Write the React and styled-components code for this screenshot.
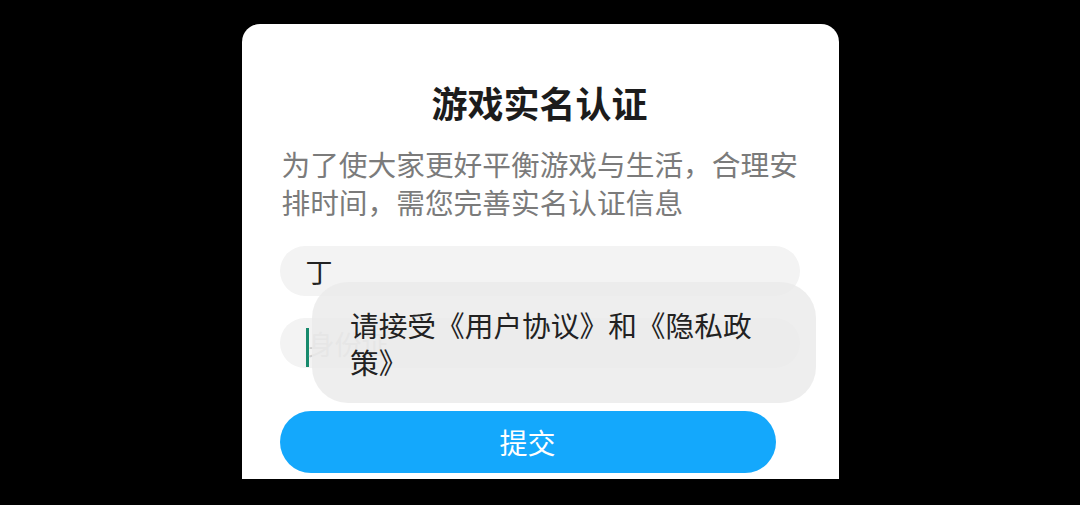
import React from "react";
import styled, { createGlobalStyle } from "styled-components";

const Global = createGlobalStyle`
  html, body { margin: 0; padding: 0; background: #000; }
  body { font-family: "Noto Sans CJK SC", "Noto Sans", sans-serif; }
`;

const Screen = styled.div`
  position: relative;
  width: 1080px;
  height: 505px;
  background: #000;
  overflow: hidden;
  display: flex;
  justify-content: center;
  padding-top: 24px;
  box-sizing: border-box;
`;

const Card = styled.div`
  width: 597px;
  height: 455px;
  background: #fff;
  border-radius: 18px 18px 0 0;
  box-sizing: border-box;
  padding: 56px 39px 0 38px;
  display: flex;
  flex-direction: column;
`;

const Title = styled.h1`
  margin: 0;
  font-size: 36px;
  line-height: 44px;
  font-weight: 700;
  color: #1c1c1c;
  text-align: center;
`;

const Desc = styled.p`
  margin: 21px 0 0 2px;
  font-size: 28.7px;
  line-height: 38px;
  color: #7b7b7b;
  width: 520px;
`;

const Field = styled.div`
  margin-top: ${(p) => p.$gap}px;
  width: 520px;
  height: 50px;
  border-radius: 25px;
  background: #f3f3f3;
  box-sizing: border-box;
  padding-left: 26px;
  display: flex;
  align-items: center;
  font-size: 27px;
  color: ${(p) => (p.$placeholder ? "#cfcfcf" : "#222")};
`;

const Caret = styled.span`
  display: inline-block;
  width: 3px;
  height: 39px;
  margin-top: 8px;
  background: #178a6c;
  margin-right: -1px;
`;

const Submit = styled.button`
  margin-top: 43px;
  width: 496px;
  height: 62px;
  border: none;
  border-radius: 31px;
  background: #14a8fc;
  color: #fff;
  font-family: inherit;
  font-size: 28px;
  padding: 0;
`;

const Toast = styled.div`
  position: absolute;
  left: 312px;
  top: 282px;
  width: 504px;
  height: 121px;
  box-sizing: border-box;
  padding: 24px 64px 0 38px;
  border-radius: 36px;
  background: rgba(234, 234, 234, 0.82);
  color: #222;
  font-size: 28.7px;
  line-height: 37px;
`;

export default function App() {
  return (
    <>
      <Global />
      <Screen>
        <Card>
          <Title>游戏实名认证</Title>
          <Desc>为了使大家更好平衡游戏与生活，合理安排时间，需您完善实名认证信息</Desc>
          <Field $gap={25}>丁</Field>
          <Field $gap={22} $placeholder>
            <Caret />
            身份证
          </Field>
          <Submit>提交</Submit>
        </Card>
        <Toast>请接受《用户协议》和《隐私政策》</Toast>
      </Screen>
    </>
  );
}
